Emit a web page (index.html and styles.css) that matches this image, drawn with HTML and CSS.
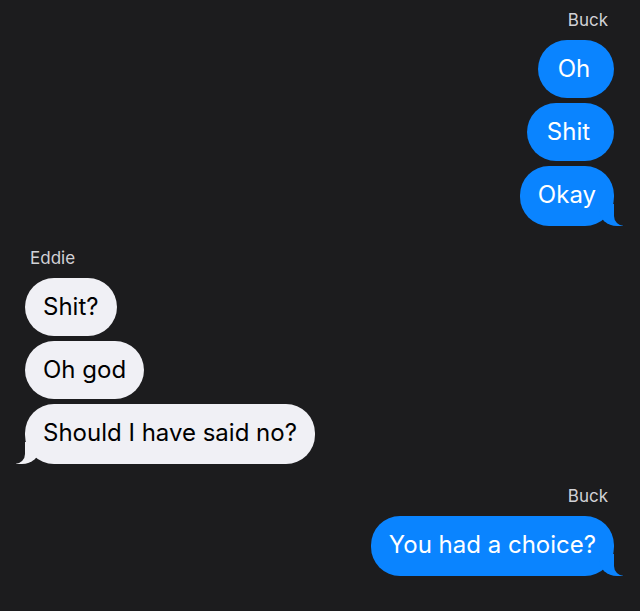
FILE: index.html
```html
<!DOCTYPE html>
<html>
<head>
<meta charset="utf-8">
<link rel="stylesheet" href="styles.css">
</head>
<body>
<main class="chat">
  <section class="group sent">
    <div class="name">Buck</div>
    <div class="bubble short oh">Oh</div>
    <div class="bubble short shit">Shit</div>
    <div class="bubble tail">Okay</div>
  </section>
  <section class="group received">
    <div class="name">Eddie</div>
    <div class="bubble">Shit?</div>
    <div class="bubble">Oh god</div>
    <div class="bubble tail">Should I have said no?</div>
  </section>
  <section class="group sent">
    <div class="name">Buck</div>
    <div class="bubble tail">You had a choice?</div>
  </section>
</main>
</body>
</html>
```
FILE: styles.css
```css
html, body {
  margin: 0;
  padding: 0;
  background: #1c1c1e;
}
body {
  font-family: Inter, "Noto Sans", sans-serif;
  -webkit-font-smoothing: antialiased;
}
.chat {
  display: flex;
  flex-direction: column;
  gap: 22px;
  padding: 10px 26px 0 25px;
}
.group {
  display: flex;
  flex-direction: column;
  gap: 5px;
}
.group.sent { align-items: flex-end; }
.group.received { align-items: flex-start; }
.name {
  font-size: 17px;
  line-height: 20px;
  color: #d1d1d6;
  margin-bottom: 5px;
  padding: 0 6px 0 5px;
}
.bubble {
  position: relative;
  box-sizing: border-box;
  font-size: 24px;
  line-height: 30px;
  padding: 14px 18px;
  border-radius: 29px;
}
.bubble.tail {
  padding-bottom: 16px;
}
.bubble.short {
  text-align: center;
  padding-right: 22px;
}
.bubble.oh { min-width: 76px; }
.bubble.shit { min-width: 87px; }
.sent .bubble {
  background: #0a84ff;
  color: #ffffff;
}
.received .bubble {
  background: #f0f0f5;
  color: #000000;
}
.bubble.tail::before,
.bubble.tail::after {
  content: "";
  position: absolute;
  bottom: 0;
  height: 22px;
}
.sent .bubble.tail::before {
  right: -9px;
  width: 24px;
  background: #0a84ff;
  border-bottom-left-radius: 18px 16px;
}
.sent .bubble.tail::after {
  right: -26px;
  width: 26px;
  background: #1c1c1e;
  border-bottom-left-radius: 10px;
}
.received .bubble.tail::before {
  left: -9px;
  width: 24px;
  background: #f0f0f5;
  border-bottom-right-radius: 18px 16px;
}
.received .bubble.tail::after {
  left: -26px;
  width: 26px;
  background: #1c1c1e;
  border-bottom-right-radius: 10px;
}
```
